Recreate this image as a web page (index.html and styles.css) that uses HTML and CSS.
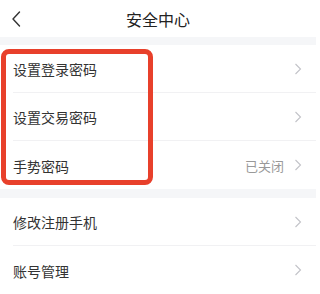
FILE: index.html
```html
<!DOCTYPE html>
<html lang="zh">
<head>
<meta charset="utf-8">
<link rel="stylesheet" href="styles.css">
</head>
<body>
<div class="page">
  <header class="nav">
    <svg class="back" width="10" height="16" viewBox="0 0 10 16"><polyline points="8.5,1 2,8 8.5,15" fill="none" stroke="#333" stroke-width="1.4" stroke-linecap="round" stroke-linejoin="round"/></svg>
    <div class="title">安全中心</div>
  </header>
  <div class="band"></div>
  <section class="group">
    <div class="row"><span class="label">设置登录密码</span><span class="right"><svg class="chev" width="8" height="12" viewBox="0 0 8 12"><polyline points="1.5,1 6.5,6 1.5,11" fill="none" stroke="#c2c3c8" stroke-width="1.1"/></svg></span></div>
    <div class="row"><span class="label">设置交易密码</span><span class="right"><svg class="chev" width="8" height="12" viewBox="0 0 8 12"><polyline points="1.5,1 6.5,6 1.5,11" fill="none" stroke="#c2c3c8" stroke-width="1.1"/></svg></span></div>
    <div class="row"><span class="label">手势密码</span><span class="right"><span class="value">已关闭</span><svg class="chev" width="8" height="12" viewBox="0 0 8 12"><polyline points="1.5,1 6.5,6 1.5,11" fill="none" stroke="#c2c3c8" stroke-width="1.1"/></svg></span></div>
  </section>
  <div class="band"></div>
  <section class="group">
    <div class="row"><span class="label">修改注册手机</span><span class="right"><svg class="chev" width="8" height="12" viewBox="0 0 8 12"><polyline points="1.5,1 6.5,6 1.5,11" fill="none" stroke="#c2c3c8" stroke-width="1.1"/></svg></span></div>
    <div class="row"><span class="label">账号管理</span><span class="right"><svg class="chev" width="8" height="12" viewBox="0 0 8 12"><polyline points="1.5,1 6.5,6 1.5,11" fill="none" stroke="#c2c3c8" stroke-width="1.1"/></svg></span></div>
  </section>
  <div class="highlight"></div>
</div>
</body>
</html>
```
FILE: styles.css
```css
html, body {
  margin: 0;
  padding: 0;
  background: #fff;
}
body {
  font-family: "Noto Sans CJK SC", "Noto Sans", sans-serif;
  color: #333;
  overflow: hidden;
}
.page {
  position: relative;
  width: 316px;
  height: 294px;
  overflow: hidden;
}
.nav {
  position: relative;
  height: 37px;
  display: flex;
  align-items: center;
  justify-content: center;
}
.back {
  position: absolute;
  left: 11px;
  top: 11px;
}
.title {
  font-size: 16px;
  color: #222;
  line-height: 1;
  margin-top: 0;
}
.band {
  height: 8px;
  background: #f5f6f8;
}
.group + .band {
  height: 9px;
}
.row {
  height: 48px;
  margin-left: 13px;
  padding-right: 14px;
  display: flex;
  align-items: center;
  justify-content: space-between;
  border-bottom: 1px solid #f1f1f3;
  box-sizing: border-box;
}
.row:last-child {
  border-bottom: none;
}
.label {
  font-size: 14px;
  color: #333;
  padding-top: 1px;
}
.right {
  display: flex;
  align-items: center;
}
.value {
  font-size: 13px;
  color: #999;
  margin-right: 10px;
}
.chev {
  display: block;
}
.highlight {
  position: absolute;
  left: 1px;
  top: 49px;
  width: 152px;
  height: 136px;
  border: 5px solid #e8402b;
  border-radius: 8px;
  box-sizing: border-box;
}
```
